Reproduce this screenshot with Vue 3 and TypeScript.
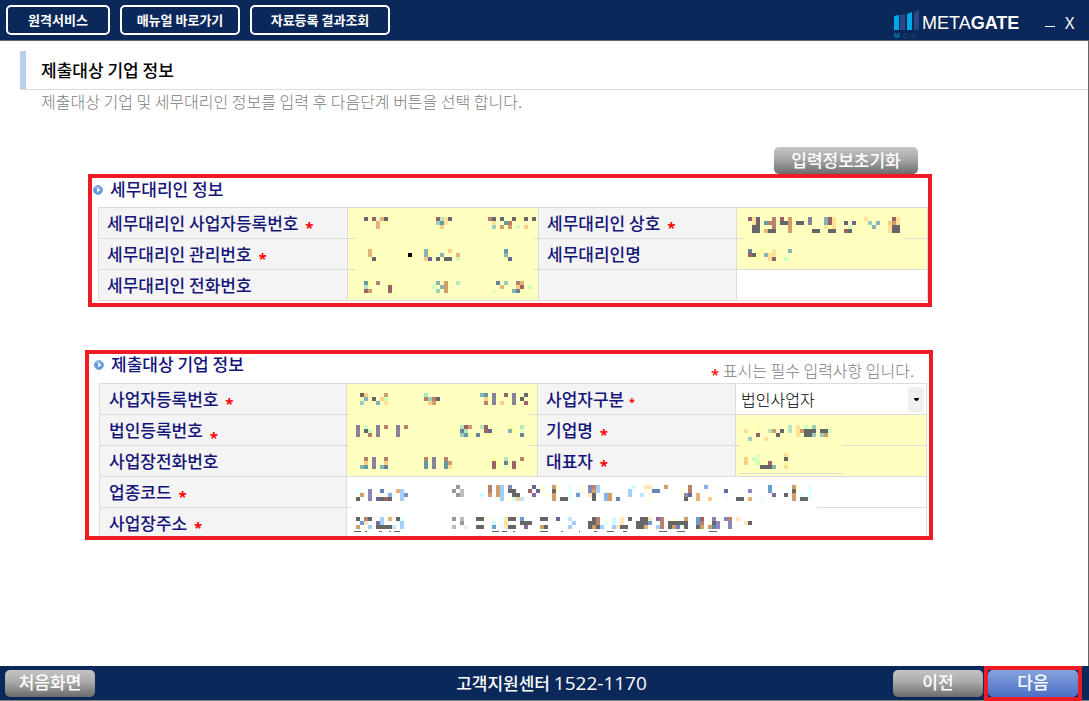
<script setup lang="ts">
interface Mosaic { x: number; y: number; rows: string[]; mask?: [number, number]; line?: [number, number, number]; dashes?: string }
interface Field { id: string; label: string; required?: boolean; mark?: string; kind: 'key' | 'plain' | 'select' | 'empty'; wide?: boolean; art?: Mosaic }

const palette: Record<string, string> = {
  k: '#666666', r: '#9a6466', o: '#e6b377', g: '#b5e6bf', t: '#84b5b0', y: '#ffffa0', p: '#ffe296', a: '#ffcc84',
  b: '#b98268', c: '#d19d69', e: '#e6ffc0', m: '#ccffc0', s: '#669aa2', d: '#64829a', v: '#848296', B: '#000000',
  n: '#66669a', A: '#9acfbe', w: '#e6ffff', l: '#a0d0ff', u: '#8888bb', f: '#84b5e6', x: '#6684b5', z: '#ffffe0',
  q: '#ffe6b8', h: '#8668a2', i: '#6a9ed2', j: '#bbe6ff', C: '#ccffff', D: '#999999', E: '#bdbdbd', F: '#ececec',
}

// Each row holds "column:cells" runs on a 4px grid.
function cells(art: Mosaic) {
  const out: { x: number; y: number; fill: string }[] = []
  art.rows.forEach((row, j) => {
    for (const run of row.split(' ')) {
      const [start, text] = run.split(':')
      ;[...(text ?? '')].forEach((ch, i) => {
        if (ch !== '.') out.push({ x: art.x + (Number(start) + i) * 4, y: art.y + j * 4, fill: palette[ch] })
      })
    }
  })
  return out
}

const agent: Field[][] = [
  [
    { id: 'agent-biz', label: '세무대리인 사업자등록번호', mark: 'low', kind: 'key', art: { x: 16, y: 9, mask: [7, 179], rows: ['0:k.reok 18:rgpk 31:bk.k..k.yk.k', '3:o.y 18:Asp 32:p..sb', '3:o 19:a 32:A.c.c.m.a'] } },
    { id: 'agent-firm', label: '세무대리인 상호', mark: 'low', kind: 'key', art: { x: 11, y: 9, mask: [7, 160], rows: ['0:rpk 6:b.r.c 15:v 19:trp 29:p 36:rp', '1:pk.sbbekkc.kk.v 19:trp 24:k.ny 30:A.t 35:acp', '1:kk 6:b...c 19:pyp 25:m 31:t 35:pkk', '1:kk.okk...c 16:kk 20:kk 24:rk 35:pkk'] } },
  ],
  [
    { id: 'agent-code', label: '세무대리인 관리번호', mark: 'low', kind: 'key', art: { x: 16, y: 10, mask: [7, 179], rows: ['1:o 15:ty 21:a 35:s', '1:o 11:B 15:ty..t...o 35:t', '2:k 15:an.k.kk.m 35:yn'] } },
    { id: 'agent-name', label: '세무대리인명', kind: 'key', art: { x: 11, y: 10, rows: ['0:d..y..p...t', '0:rky.tpp', '2:y..pr..m'] } },
  ],
  [
    { id: 'agent-tel', label: '세무대리인 전화번호', kind: 'key', art: { x: 16, y: 11, rows: ['0:sy.b..y 18:t.c..g 33:d.A..bo', '0:g.....r 17:m.tc 34:o...ar.m', '0:rc....r 18:A.c 32:e....tdy'] } },
    { id: 'agent-none', label: '', kind: 'empty' },
  ],
]

const company: Field[][] = [
  [
    { id: 'co-biz', label: '사업자등록번호', mark: 'low', kind: 'key', art: { x: 13, y: 9, mask: [2, 179], rows: ['0:ka....c 16:g 30:ts.v..r.v..k', '1:t.k.am 16:bAbk 31:a.v....v.k', '0:A...t.p 17:ac 31:b.v.a..v..r'] } },
    { id: 'co-type', label: '사업자구분', mark: 'high', kind: 'select' },
  ],
  [
    { id: 'co-reg', label: '법인등록번호', mark: 'lower', kind: 'key', art: { x: 9, y: 10, mask: [2, 179], rows: ['0:v.m..v.b..v.b 26:grc..gr 38:y..g', '0:v.km.v....v 24:y.dg....rn 38:ty.e', '0:v..b.v....v 26:Asy.d..y 41:d'] } },
    { id: 'co-name', label: '기업명', mark: 'low', kind: 'key', art: { x: 8, y: 10, mask: [4, 102], rows: ['3:y 11:g.p.m.A', '0:p 6:gc.k.g.pckkk.kkm', '3:r 8:k 13:p.kkA.Ac', '1:A...p'] } },
  ],
  [
    { id: 'co-tel', label: '사업장전화번호', kind: 'key', art: { x: 13, y: 11, rows: ['1:b.v..b 16:b.v..b 33:y..g...b', '1:a.v..a 16:s.v..sc 33:ry.d.r', '0:ts.v.td 16:s.v..sp 33:r..e.r'] } },
    { id: 'co-ceo', label: '대표자', mark: 'low', kind: 'key', art: { x: 8, y: 7, line: [4, 27, 102], rows: ['3:e 10:p', '0:a.me 10:k', '0:a..my.r...y', '4:kkkt..p'] } },
  ],
  [
    { id: 'co-kind', label: '업종코드', mark: 'low', kind: 'plain', wide: true, art: { x: 9, y: 8, mask: [4, 466], rows: [
      '25:D 33:b.cl.u 44:n.z..cz..w..z.ubl 69:C..qq...c 83:b...f 103:i..z..cz..w',
      '0:w..u..x...ol 24:D.E 33:b.cl.kk 43:r.nz..kz..w.wz.ucl 68:l...z.xx 81:z.b 92:n 98:u 103:i 109:kz..w',
      '1:c.u.z..f..lu 25:DE 31:C.c.cl..kk 44:h..z.c...w.i..qk..fc 68:l..j.z 81:zun.o 92:w 104:h..k.c.w.w',
      '0:k..u.nkrk..l 36:l.zCaj 49:c.kkw 59:k..fc.x 73:z 82:k..o..a 95:kk.o..w 109:c.kkw'] } },
  ],
  [
    { id: 'co-addr', label: '사업장주소', mark: 'low', kind: 'plain', wide: true, art: { x: 9, y: 9, dashes: 'M7 23h7M18 23h2M32 23h3M42 23h2M47 23h6M145 23h7M155 23h5M166 23h2M193 23h8M214 23h2M232 23h1M247 23h3M260 23h7M276 23h4M312 23h8M330 23h8M362 23h8', rows: [
      '0:k.bk..l.o.kw 24:D.E 30:kk.z..wqkk.i 46:kk..n..j 59:kb...C.q.k..kkq.hb..z..c..ir..u..ub.q',
      '1:iq..hl...wl 26:D 34:C..p...kkk 54:l...kkb.w.C.q...kkki..b.kkkkk..ib.zku..u...qk',
      '0:c..l.kkkkj.l 24:E..F 30:kk..i.wqkk..h...ck 53:l 58:kckl..lqkk..kko..lb.kcx.k..kc.cxu..u'] } },
  ],
]
</script>

<template>
  <div class="app">
    <header class="topbar">
      <nav class="menu">
        <button type="button" class="b1">원격서비스</button>
        <button type="button" class="b2">매뉴얼 바로가기</button>
        <button type="button" class="b3">자료등록 결과조회</button>
      </nav>
      <div class="brand">
        <svg class="logo" width="28" height="30" viewBox="0 0 28 30" aria-hidden="true">
          <path d="M1 7 6 6V21H1z" fill="#00a7e8" />
          <path d="M7 6 12 5V21H7z" fill="#294886" />
          <path d="M14 5 19 3V21H14z" fill="#00a7e8" />
          <path d="M21 3 26 1V21H21z" fill="#294886" />
          <g font-family="Liberation Sans, sans-serif" font-size="7">
            <text x="1" y="29" fill="#087dbe" font-weight="700">M</text>
            <text x="10" y="29" fill="#294886">C</text>
            <text x="18" y="29" fill="#294886">G</text>
          </g>
        </svg>
        <span class="wordmark">META<b>GATE</b></span>
      </div>
      <div class="window">
        <button type="button" aria-label="최소화"><svg width="10" height="12" viewBox="0 0 10 12"><path d="M0 9.5h10" stroke="#fff" /></svg></button>
        <button type="button" class="close">X</button>
      </div>
    </header>

    <main class="body">
      <div class="title"><h1>제출대상 기업 정보</h1></div>
      <p class="lead">제출대상 기업 및 세무대리인 정보를 입력 후 다음단계 버튼을 선택 합니다.</p>
      <div class="tools"><button type="button" class="btn reset">입력정보초기화</button></div>

      <section v-for="(group, n) in [agent, company]" :key="n" :class="['panel', n ? 'company' : 'agent']">
        <div class="heading">
          <svg width="10" height="10" viewBox="0 0 10 10" aria-hidden="true">
            <circle cx="5" cy="5" r="4.5" fill="#5f9ade" stroke="#78a7dc" />
            <path d="M2 3Q5 0 8 3" fill="none" stroke="#a9cdf3" />
            <path d="M4 2.5 7.5 5 4 7.5z" fill="#fff" />
          </svg>
          <h2>{{ n ? '제출대상 기업 정보' : '세무대리인 정보' }}</h2>
          <p v-if="n" class="note"><span class="star">*</span> 표시는 필수 입력사항 입니다.</p>
        </div>
        <table>
          <colgroup><col class="c1" /><col /><col class="c3" /><col /></colgroup>
          <tbody>
            <tr v-for="(row, i) in group" :key="i">
              <template v-for="f in row" :key="f.id">
                <th scope="row"><label v-if="f.label" :for="f.id">{{ f.label }} <span v-if="f.mark" :class="['star', f.mark]">*</span></label></th>
                <td :class="f.kind" :colspan="f.wide ? 3 : 1">
                  <select v-if="f.kind === 'select'" :id="f.id"><option>법인사업자</option></select>
                  <span v-if="f.kind === 'select'" class="arrow" aria-hidden="true">
                    <svg width="5" height="3" viewBox="0 0 5 3"><path d="M0 0H5V1L3 3H2L0 1z" fill="#000" /></svg>
                  </span>
                  <input v-else-if="f.kind !== 'empty'" :id="f.id" type="text" />
                  <svg v-if="f.art" class="mosaic" width="100%" height="30" shape-rendering="crispEdges" aria-hidden="true">
                    <rect v-if="f.art.mask" :x="f.art.mask[0]" y="30" :width="f.art.mask[1]" height="1" :fill="f.kind === 'key' ? '#ffffc0' : '#ffffff'" />
                    <rect v-if="f.art.line" :x="f.art.line[0]" :y="f.art.line[1]" :width="f.art.line[2]" height="1" fill="#dcdcdc" />
                    <rect v-for="(c, k) in cells(f.art)" :key="k" :x="c.x" :y="c.y" width="4" height="4" :fill="c.fill" />
                    <path v-if="f.art.dashes" :d="f.art.dashes" stroke="#666" />
                  </svg>
                </td>
              </template>
            </tr>
          </tbody>
        </table>
      </section>
    </main>

    <footer class="bottombar">
      <button type="button" class="btn">처음화면</button>
      <p>고객지원센터 <span>1522-1170</span></p>
      <div class="steps">
        <button type="button" class="btn">이전</button>
        <span class="focus"><button type="button" class="btn next">다음</button></span>
      </div>
    </footer>
  </div>
</template>

<style>
body { margin: 0; background: #fff; }
</style>

<style scoped>
* { box-sizing: border-box; }
.app {
  min-height: 100vh; display: flex; flex-direction: column;
  font-family: "Noto Sans CJK KR", "Noto Sans", sans-serif; font-size: 17px; line-height: 24px; color: #000;
}
button, select, input { font: inherit; margin: 0; padding: 0; }
h1, h2, p { margin: 0; }
.topbar { height: 41px; display: flex; background: #0a2859; border-bottom: 1px solid #666; color: #fff; }
.menu { display: flex; gap: 10px; padding: 5px 6px; align-items: flex-start; flex: 1; }
.menu button {
  height: 30px; border: 2px solid #fff; border-radius: 5px; background: transparent; color: #fff;
  font-size: 13px; font-weight: 700; line-height: 24px; white-space: nowrap;
}
.menu .b1 { width: 104px; }
.menu .b2 { width: 120px; }
.menu .b3 { width: 140px; }
.brand { display: flex; align-items: flex-start; padding-top: 9px; width: 152px; }
.logo { margin-right: 1px; }
.wordmark { font-family: "Liberation Sans", sans-serif; font-size: 18px; line-height: 28px; }
.window { display: flex; gap: 10px; width: 44px; padding-top: 15px; align-items: flex-start; }
.window button { border: 0; background: none; color: #fff; line-height: 16px; height: 16px; font-family: "Noto Sans", sans-serif; font-size: 16px; }
.window svg { display: block; }
.body { flex: 1; border-right: 1px solid #666; padding-top: 10px; }
.title { margin-left: 20px; border-left: 6px solid #b7cfea; box-shadow: 0 1px #dcdcdc; height: 38px; padding: 7px 15px 0; }
h1 { font-size: 17px; font-weight: 500; }
.lead { margin-left: 41px; font-size: 16px; color: #808080; font-weight: 300; }
.tools { display: flex; justify-content: flex-end; margin: 34px 170px 0 0; }
.btn {
  width: 90px; height: 27px; border: 0; border-radius: 5px; color: #fff; font-weight: 500; line-height: 24px; padding-bottom: 2px;
  background: linear-gradient(#c6c6c6, #a8a8a8 45%, #6c6c6c);
}
.reset { width: 144px; }
.panel { border: 4px solid #ed1c24; overflow: hidden; }
.agent { margin: 0 156px 0 88px; height: 133px; }
.company { margin: 43px 155px 0 85px; height: 190px; }
.heading { display: flex; align-items: center; height: 29px; padding: 0 15px 6px 1px; }
.company .heading { padding-left: 5px; padding-bottom: 8px; }
.heading svg { flex: none; }
h2 { font-size: 17px; font-weight: 500; color: #14147a; margin-left: 7px; padding-bottom: 1px; flex: 1; }
.note { font-size: 16px; font-weight: 300; color: #808080; padding-top: 10px; }
table { border-collapse: collapse; table-layout: fixed; width: calc(100% - 6px); margin-left: 6px; }
.company table { width: calc(100% - 12px); margin-left: 10px; }
.c1 { width: 249px; }
.company .c1 { width: 247px; }
.c3 { width: 198px; }
tr { height: 31px; }
th, td { border: 1px solid #dcdcdc; height: 31px; padding: 0; }
th { background: #f4f4f4; color: #14147a; text-align: left; font-weight: 500; padding-left: 8px; white-space: nowrap; }
.company th:first-child { padding-left: 9px; }
th label { display: block; line-height: 24px; height: 24px; }
td { position: relative; background: #fff; }
td.key { background: #ffffc0; }
input { display: block; width: 100%; height: 30px; border: 0; background: transparent; outline: 0; }
select { display: block; width: 100%; height: 30px; border: 0; padding-left: 5px; background: transparent; appearance: none; color: #000; font-size: 16px; font-weight: 300; }
.arrow { position: absolute; top: 3px; right: 2px; width: 16px; height: 25px; background: #f0f0f0; display: flex; align-items: center; justify-content: center; pointer-events: none; }
.mosaic { position: absolute; left: 0; top: 0; overflow: visible; pointer-events: none; }
.star { color: #f00; font-family: "Noto Sans", sans-serif; font-weight: 500; font-size: 15px; line-height: 1px; vertical-align: -3px; }
th .star { margin-left: 3px; font-weight: 700; }
.star.lower { vertical-align: -6px; }
th .star.high { margin-left: 1px; font-size: 11px; vertical-align: 0; }
.bottombar { height: 35px; display: flex; align-items: center; justify-content: space-between; background: #0a2859; border-bottom: 1px solid #808080; padding: 0 11px 0 5px; color: #fff; }
.bottombar p { flex: 1; padding-left: 115px; padding-bottom: 1px; text-align: center; font-weight: 500; }
.bottombar p span { font-family: "Open Sans", sans-serif; font-size: 19px; }
.steps { display: flex; gap: 5px; }
.focus { display: flex; outline: 4px solid #ed1c24; }
.next { background: linear-gradient(#85a3dc, #4a70c4); }
</style>
